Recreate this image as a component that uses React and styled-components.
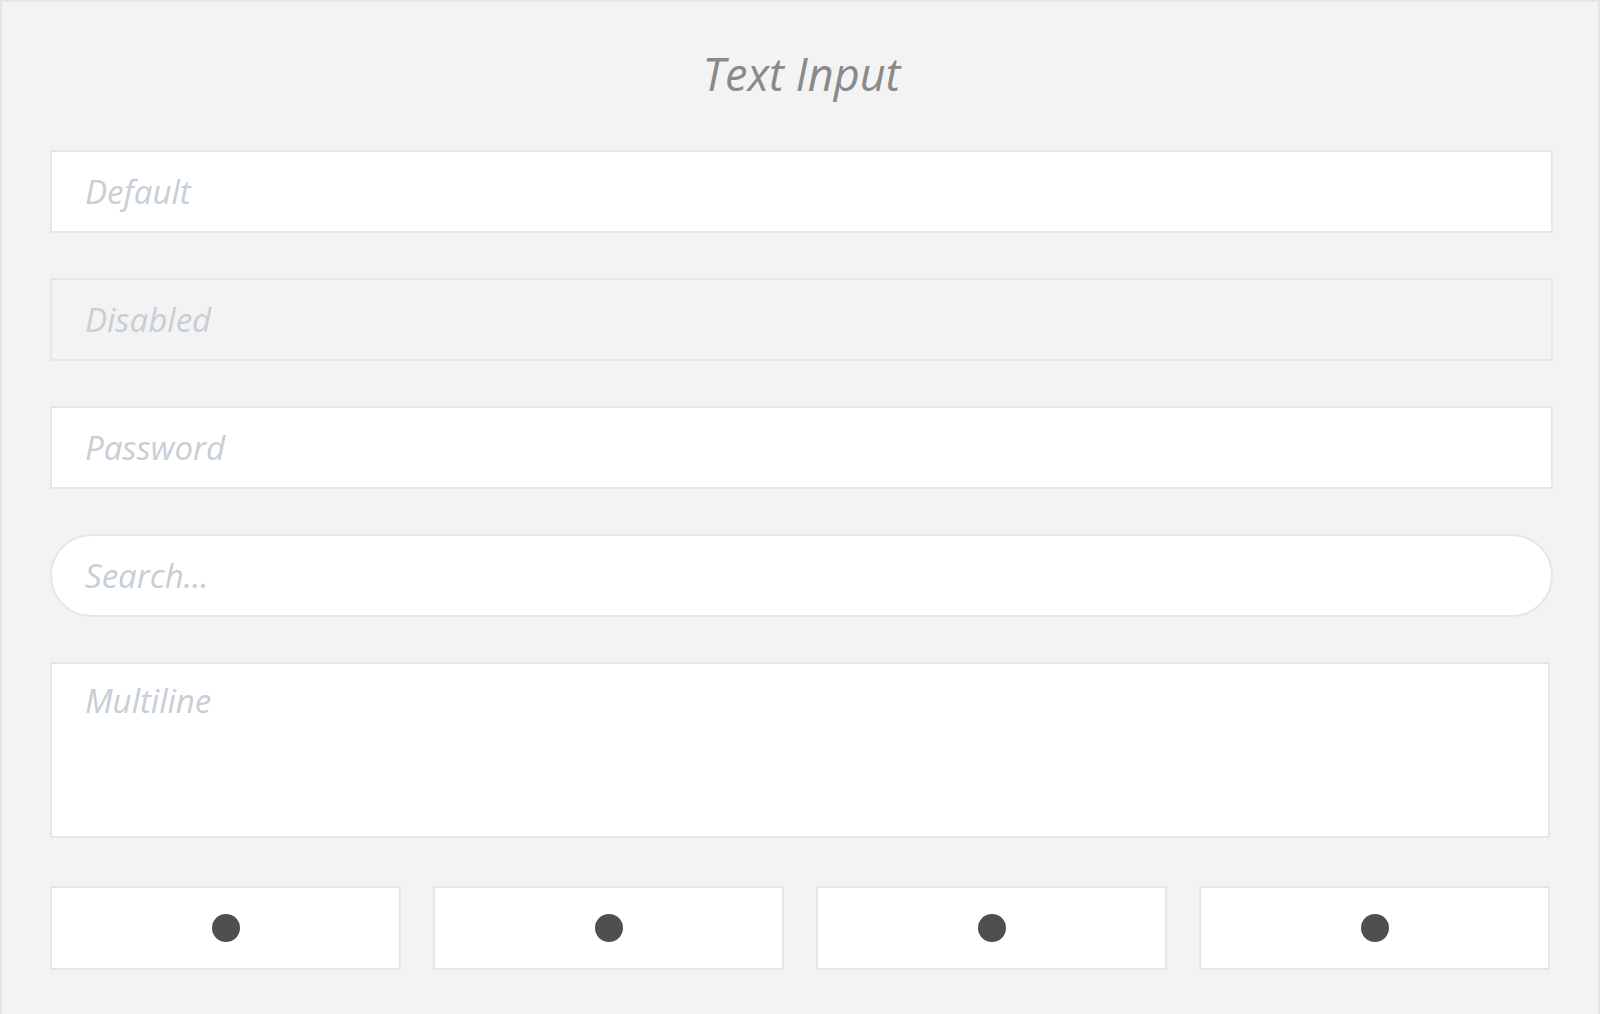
import React from "react";
import styled, { createGlobalStyle, css } from "styled-components";

const GlobalStyle = createGlobalStyle`
  html, body {
    margin: 0;
    padding: 0;
    background: #f3f3f3;
  }
  * { box-sizing: border-box; }
`;

const Page = styled.div`
  min-height: 1014px;
  background: #f3f3f3;
  border: 2px solid #e6e6e6;
  border-bottom: none;
  padding: 42px 45px 40px 48px;
  font-family: "Open Sans", "Noto Sans", sans-serif;
`;

const Title = styled.h1`
  margin: 0 0 46px;
  text-align: center;
  font-size: 45px;
  font-style: italic;
  font-weight: 400;
  line-height: 60px;
  color: #8a8a8a;
`;

const Stack = styled.div`
  display: flex;
  flex-direction: column;
  gap: 45px;
`;

const fieldBase = css`
  display: block;
  width: 100%;
  border: 2px solid #e6e6e6;
  background: #ffffff;
  font-family: "Open Sans", "Noto Sans", sans-serif;
  font-size: 33px;
  font-style: italic;
  font-weight: 400;
  color: #555;
  outline: none;
  margin: 0;
  &::placeholder {
    color: #c7ced6;
    opacity: 1;
  }
`;

const Field = styled.input`
  ${fieldBase}
  height: 83px;
  padding: 0 33px;
  border-radius: ${(p) => (p.$pill ? "42px" : "0")};
  &:disabled {
    background: #f3f3f3;
  }
`;

const Area = styled.textarea`
  ${fieldBase}
  width: calc(100% - 3px);
  height: 176px;
  padding: 14px 33px;
  resize: none;
  line-height: normal;
`;

const BoxRow = styled.div`
  display: grid;
  grid-template-columns: repeat(4, 1fr);
  gap: 32px;
  margin-top: 3px;
  margin-right: 3px;
`;

const Box = styled.div`
  height: 84px;
  background: #ffffff;
  border: 2px solid #e6e6e6;
  display: flex;
  align-items: center;
  justify-content: center;
`;

const Dot = styled.span`
  width: 28px;
  height: 28px;
  border-radius: 50%;
  background: #4f4f4f;
`;

export default function App() {
  return (
    <>
      <GlobalStyle />
      <Page>
        <Title>Text Input</Title>
        <Stack>
          <Field placeholder="Default" />
          <Field placeholder="Disabled" disabled />
          <Field type="password" placeholder="Password" />
          <Field $pill placeholder="Search..." />
          <Area placeholder="Multiline" />
          <BoxRow>
            {[0, 1, 2, 3].map((i) => (
              <Box key={i}>
                <Dot />
              </Box>
            ))}
          </BoxRow>
        </Stack>
      </Page>
    </>
  );
}
